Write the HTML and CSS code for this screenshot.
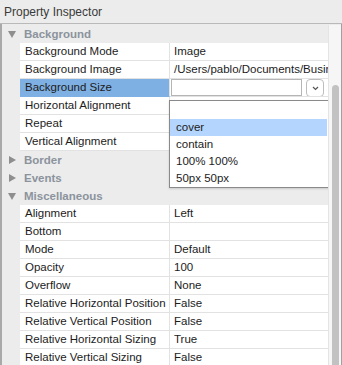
FILE: index.html
```html
<!doctype html>
<html lang="en">
    <head>
        <title>Property Inspector</title>
        <meta charset="utf-8">
        <link rel="stylesheet" href="styles.css">
    </head>
    <body>
        <div class="title">Property Inspector</div>
        <div class="inspector">
            <div class="grid">
                <div class="row group">
                    <span class="arrow"><svg width="8" height="7" viewBox="0 0 8 7"><path d="M0 0h8L4 7z" fill="#8e8e8e"/></svg></span>
                    <span class="label">Background</span>
                </div>
                <div class="row prop"><span class="gut"></span><span class="name">Background Mode</span><span class="value">Image</span></div>
                <div class="row prop"><span class="gut"></span><span class="name">Background Image</span><span class="value">/Users/pablo/Documents/Business</span></div>
                <div class="row prop"><span class="gut"></span><span class="name selected">Background Size</span>
                    <span class="value editing">
                        <span class="input"></span>
                        <span class="drop-btn"><svg width="7" height="5" viewBox="0 0 7 5"><path d="M1 1l2.5 2.5L6 1" stroke="#555" stroke-width="1.2" fill="none"/></svg></span>
                    </span>
                </div>
                <div class="row prop"><span class="gut"></span><span class="name">Horizontal Alignment</span><span class="value"></span></div>
                <div class="row prop"><span class="gut"></span><span class="name">Repeat</span><span class="value"></span></div>
                <div class="row prop"><span class="gut"></span><span class="name">Vertical Alignment</span><span class="value"></span></div>
                <div class="row group">
                    <span class="arrow"><svg width="7" height="8" viewBox="0 0 7 8"><path d="M0 0v8l7-4z" fill="#8e8e8e"/></svg></span>
                    <span class="label">Border</span>
                </div>
                <div class="row group">
                    <span class="arrow"><svg width="7" height="8" viewBox="0 0 7 8"><path d="M0 0v8l7-4z" fill="#8e8e8e"/></svg></span>
                    <span class="label">Events</span>
                </div>
                <div class="row group">
                    <span class="arrow"><svg width="8" height="7" viewBox="0 0 8 7"><path d="M0 0h8L4 7z" fill="#8e8e8e"/></svg></span>
                    <span class="label">Miscellaneous</span>
                </div>
                <div class="row prop"><span class="gut"></span><span class="name">Alignment</span><span class="value">Left</span></div>
                <div class="row prop"><span class="gut"></span><span class="name">Bottom</span><span class="value"></span></div>
                <div class="row prop"><span class="gut"></span><span class="name">Mode</span><span class="value">Default</span></div>
                <div class="row prop"><span class="gut"></span><span class="name">Opacity</span><span class="value">100</span></div>
                <div class="row prop"><span class="gut"></span><span class="name">Overflow</span><span class="value">None</span></div>
                <div class="row prop"><span class="gut"></span><span class="name">Relative Horizontal Position</span><span class="value">False</span></div>
                <div class="row prop"><span class="gut"></span><span class="name">Relative Vertical Position</span><span class="value">False</span></div>
                <div class="row prop"><span class="gut"></span><span class="name">Relative Horizontal Sizing</span><span class="value">True</span></div>
                <div class="row prop"><span class="gut"></span><span class="name">Relative Vertical Sizing</span><span class="value">False</span></div>

                <ul class="dropdown">
                    <li></li>
                    <li class="hover">cover</li>
                    <li>contain</li>
                    <li>100% 100%</li>
                    <li>50px 50px</li>
                </ul>
            </div>
            <div class="scrollbar"><div class="thumb"></div></div>
        </div>
    </body>
</html>
```

FILE: styles.css
```css
body {
    margin: 0;
    font-family: "Liberation Sans", Arial, sans-serif;
    font-size: 11.5px;
    color: #1c1c1c;
    background: #fff;
}
.title {
    height: 23px;
    line-height: 24px;
    padding-left: 4px;
    background: #ececec;
    border-bottom: 1px solid #b9b9b9;
    color: #3a3a3a;
    font-size: 12px;
}
.inspector {
    display: flex;
    height: 340px;
    padding-top: 1px;
    background: #ececec;
    border-left: 2px solid #a9a9a9;
    border-right: 1px solid #a0a0a0;
    overflow: hidden;
}
.grid {
    flex: 1;
    position: relative;
}
.row {
    display: grid;
    grid-template-columns: 18px 150px 1fr;
    height: 18px;
    line-height: 18px;
    box-sizing: border-box;
}
.group {
    background: #ececec;
}
.arrow {
    display: flex;
    align-items: center;
    justify-content: center;
    padding-left: 2px;
}
.group .label {
    grid-column: 2 / 4;
    padding-left: 4px;
    font-weight: bold;
    color: #8b939d;
}
.gut {
    background: #ececec;
}
.name, .value {
    background: #fff;
    border-bottom: 1px solid #e2e2e2;
    white-space: nowrap;
    overflow: hidden;
    line-height: 17px;
}
.name {
    padding-left: 5px;
    border-right: 1px solid #e2e2e2;
}
.value {
    padding-left: 4px;
}
.name.selected {
    background: #7fb0e3;
    border-bottom-color: #7fb0e3;
}
.value.editing {
    display: flex;
    align-items: flex-start;
    padding-left: 1px;
}
.input {
    width: 129px;
    height: 15px;
    border: 1px solid #b5b5b5;
    background: #fff;
}
.drop-btn {
    display: flex;
    align-items: center;
    justify-content: center;
    width: 16px;
    height: 16px;
    margin-left: 4px;
    border: 1px solid #bdbdbd;
    border-radius: 4px;
    background: #fff;
}
.dropdown {
    position: absolute;
    left: 167px;
    top: 75px;
    width: 157px;
    margin: 0;
    padding: 0 2px 0 0;
    list-style: none;
    background: #fff;
    border: 1px solid #8a8a8a;
    box-shadow: 0 1px 2px rgba(0, 0, 0, 0.15);
}
.dropdown li {
    height: 17px;
    line-height: 17px;
    padding-left: 6px;
}
.dropdown li:first-child {
    height: 18px;
}
.dropdown li.hover {
    background: #b4d5fd;
}
.scrollbar {
    position: relative;
    width: 12px;
    background: #f6f6f6;
    border-left: 1px solid #e4e4e4;
}
.thumb {
    position: absolute;
    left: 3px;
    top: 60px;
    bottom: -10px;
    width: 7px;
    border-radius: 4px;
    background: #c2c2c2;
}
```
